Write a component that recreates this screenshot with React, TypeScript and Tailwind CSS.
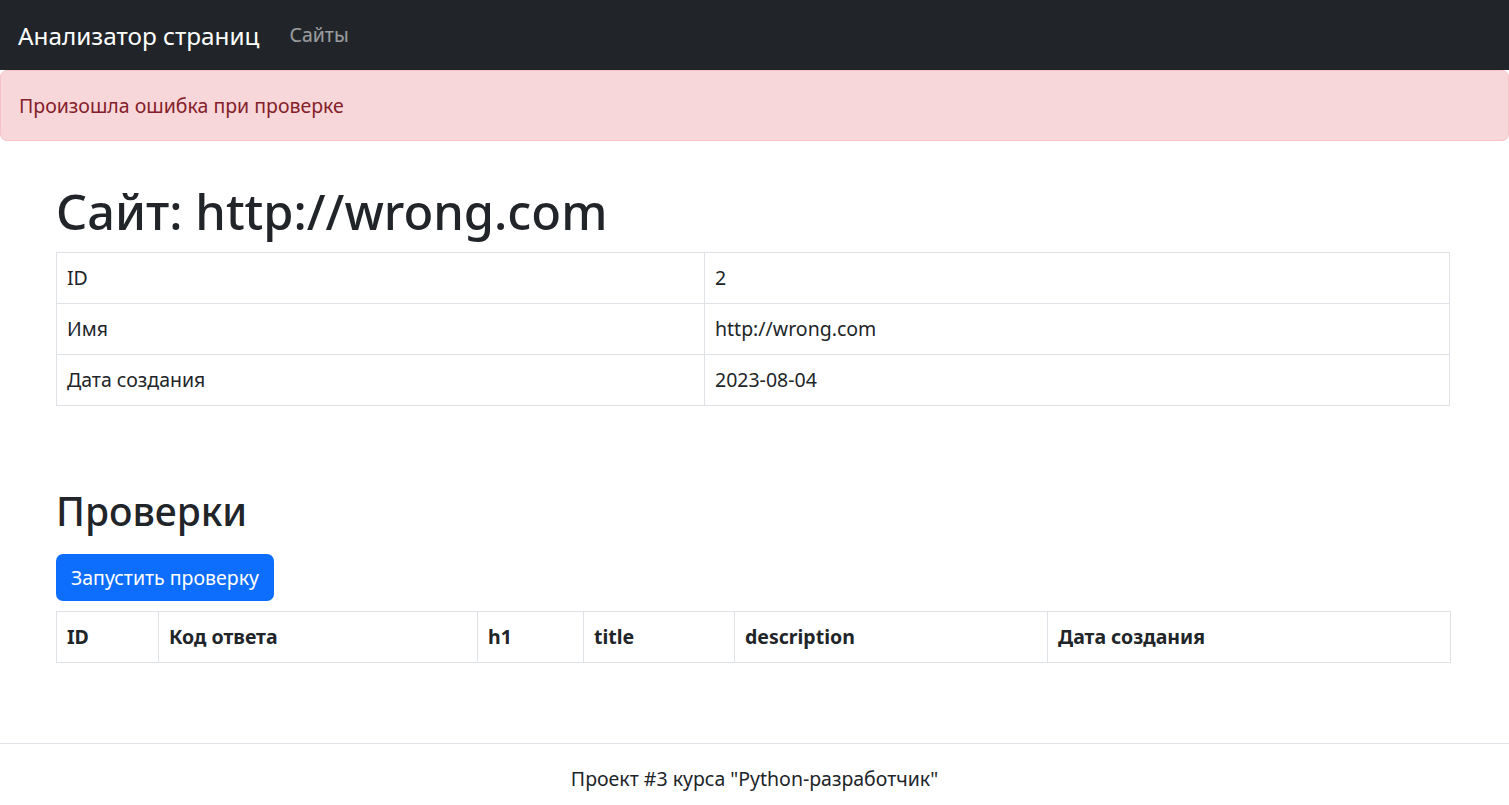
import React from "react";

const font = { fontFamily: '"Noto Sans", "Open Sans", sans-serif' };

const siteRows = [
  ["ID", "2"],
  ["Имя", "http://wrong.com"],
  ["Дата создания", "2023-08-04"],
];

const checkCols = [
  { name: "ID", w: "w-[102px]" },
  { name: "Код ответа", w: "w-[319px]" },
  { name: "h1", w: "w-[106px]" },
  { name: "title", w: "w-[151px]" },
  { name: "description", w: "w-[313px]" },
  { name: "Дата создания", w: "w-[403px]" },
];

export default function App() {
  return (
    <div className="min-h-screen bg-white text-[#212529] text-[19.5px] leading-[30px]" style={font}>
      {/* NAVBAR */}
      <nav className="h-[70px] bg-[#212529] flex items-center px-[15px]">
        <a href="#" className="text-white text-[24.3px] leading-[37px] mr-[20px] pl-[3px]">
          Анализатор страниц
        </a>
        <a href="#" className="text-white/55 text-[19.5px] px-[10px]">
          Сайты
        </a>
      </nav>

      {/* ALERT */}
      <div className="bg-[#f8d7da] border border-[#f5c2c7] text-[#842029] rounded-[7px] px-[18px] h-[71px] flex items-center">
        Произошла ошибка при проверке
      </div>

      <main className="pl-[56px] pr-[59px]">
        <h1 className="mt-[40px] mb-[11px] text-[48.8px] leading-[60px] font-medium">
          Сайт: http://wrong.com
        </h1>
        <table className="w-full border-collapse border border-[#dee2e6]">
          <tbody>
            {siteRows.map(([k, v]) => (
              <tr key={k} className="border-b border-[#dee2e6]">
                <td className="w-[648px] h-[51px] px-[10px] border-r border-[#dee2e6]">{k}</td>
                <td className="h-[51px] px-[10px]">{v}</td>
              </tr>
            ))}
          </tbody>
        </table>

        <h2 className="mt-[81px] mb-[19px] text-[39px] leading-[48px] font-medium">Проверки</h2>
        <button className="bg-[#0d6efd] text-white rounded-[7px] h-[47px] px-[15px] whitespace-nowrap mb-[10px]">
          Запустить проверку
        </button>
        <table className="w-full border-collapse border border-[#dee2e6] table-fixed">
          <thead>
            <tr>
              {checkCols.map((c) => (
                <th
                  key={c.name}
                  className={`${c.w} h-[51px] px-[10px] text-left font-bold border-r border-b border-[#dee2e6]`}
                >
                  {c.name}
                </th>
              ))}
            </tr>
          </thead>
        </table>
      </main>

      {/* FOOTER */}
      <footer className="mt-[80px] border-t border-[#dee2e6] py-[20px] text-center">
        Проект #3 курса "Python-разработчик"
      </footer>
    </div>
  );
}
